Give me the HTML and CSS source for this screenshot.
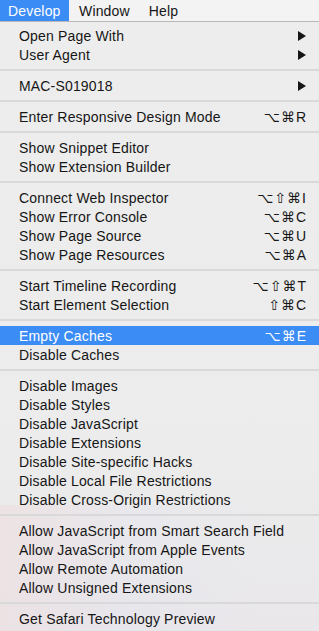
FILE: index.html
```html
<!DOCTYPE html>
<html>
<head>
<meta charset="utf-8">
<link rel="stylesheet" href="styles.css">
</head>
<body>
<div class="menubar">
  <span class="mb-item active">Develop</span>
  <span class="mb-item">Window</span>
  <span class="mb-item">Help</span>
</div>
<div class="menu">
  <div class="item"><span>Open Page With</span><svg class="tri" width="9" height="10" viewBox="0 0 9 10"><polygon points="0,0 8,5 0,10"/></svg></div>
  <div class="item"><span>User Agent</span><svg class="tri" width="9" height="10" viewBox="0 0 9 10"><polygon points="0,0 8,5 0,10"/></svg></div>
  <div class="sep"></div>
  <div class="item"><span>MAC-S019018</span><svg class="tri" width="9" height="10" viewBox="0 0 9 10"><polygon points="0,0 8,5 0,10"/></svg></div>
  <div class="sep"></div>
  <div class="item"><span>Enter Responsive Design Mode</span><span class="sc">⌥⌘R</span></div>
  <div class="sep"></div>
  <div class="item"><span>Show Snippet Editor</span></div>
  <div class="item"><span>Show Extension Builder</span></div>
  <div class="sep"></div>
  <div class="item"><span>Connect Web Inspector</span><span class="sc">⌥⇧⌘I</span></div>
  <div class="item"><span>Show Error Console</span><span class="sc">⌥⌘C</span></div>
  <div class="item"><span>Show Page Source</span><span class="sc">⌥⌘U</span></div>
  <div class="item"><span>Show Page Resources</span><span class="sc">⌥⌘A</span></div>
  <div class="sep"></div>
  <div class="item"><span>Start Timeline Recording</span><span class="sc">⌥⇧⌘T</span></div>
  <div class="item"><span>Start Element Selection</span><span class="sc">⇧⌘C</span></div>
  <div class="sep"></div>
  <div class="item selected"><span>Empty Caches</span><span class="sc">⌥⌘E</span></div>
  <div class="item"><span>Disable Caches</span></div>
  <div class="sep"></div>
  <div class="item"><span>Disable Images</span></div>
  <div class="item"><span>Disable Styles</span></div>
  <div class="item"><span>Disable JavaScript</span></div>
  <div class="item"><span>Disable Extensions</span></div>
  <div class="item"><span>Disable Site-specific Hacks</span></div>
  <div class="item"><span>Disable Local File Restrictions</span></div>
  <div class="item"><span>Disable Cross-Origin Restrictions</span></div>
  <div class="sep"></div>
  <div class="item"><span>Allow JavaScript from Smart Search Field</span></div>
  <div class="item"><span>Allow JavaScript from Apple Events</span></div>
  <div class="item"><span>Allow Remote Automation</span></div>
  <div class="item"><span>Allow Unsigned Extensions</span></div>
  <div class="sep"></div>
  <div class="item"><span>Get Safari Technology Preview</span></div>
</div>
</body>
</html>
```
FILE: styles.css
```css
html, body {
  margin: 0;
  padding: 0;
}
body {
  width: 319px;
  height: 631px;
  overflow: hidden;
  font-family: "Liberation Sans", Arial, "DejaVu Sans", sans-serif;
  font-size: 14px;
  letter-spacing: 0.17px;
  color: #161616;
  background: #ececec;
}
.menubar {
  height: 22px;
  display: flex;
  align-items: stretch;
  background: #f3f3f3;
  border-bottom: 1px solid #b8b8b8;
  box-sizing: border-box;
}
.mb-item {
  display: flex;
  align-items: center;
  padding: 0 9px 0 10px;
}
.mb-item.active {
  background: #3c8cf6;
  color: #fff;
  padding: 0 9px 0 8px;
  width: 52px;
}
.menu {
  padding-top: 4px;
  height: 609px;
  background: linear-gradient(to bottom, #ededed 0%, #ececec 70%, #e9e7ea 100%);
  position: relative;
}
.menu::after {
  content: "";
  position: absolute;
  left: 0; right: 0; bottom: 0;
  height: 130px;
  background: linear-gradient(100deg, rgba(240,215,215,0.4) 0%, rgba(225,225,240,0.25) 40%, rgba(236,236,236,0) 80%);
  pointer-events: none;
}
.item {
  height: 19px;
  display: flex;
  align-items: center;
  justify-content: space-between;
  padding: 0 12px 0 19px;
  position: relative;
  z-index: 1;
}
.item.selected {
  background: #3c8cf6;
  color: #fff;
}
.sc {
  font-size: 14px;
  letter-spacing: 1px;
}
.tri {
  fill: #161616;
}
.sep {
  height: 12px;
  display: flex;
  align-items: center;
  position: relative;
  z-index: 1;
}
.sep::before {
  content: "";
  flex: 1;
  height: 2px;
  background: #d9d9d9;
}
```
